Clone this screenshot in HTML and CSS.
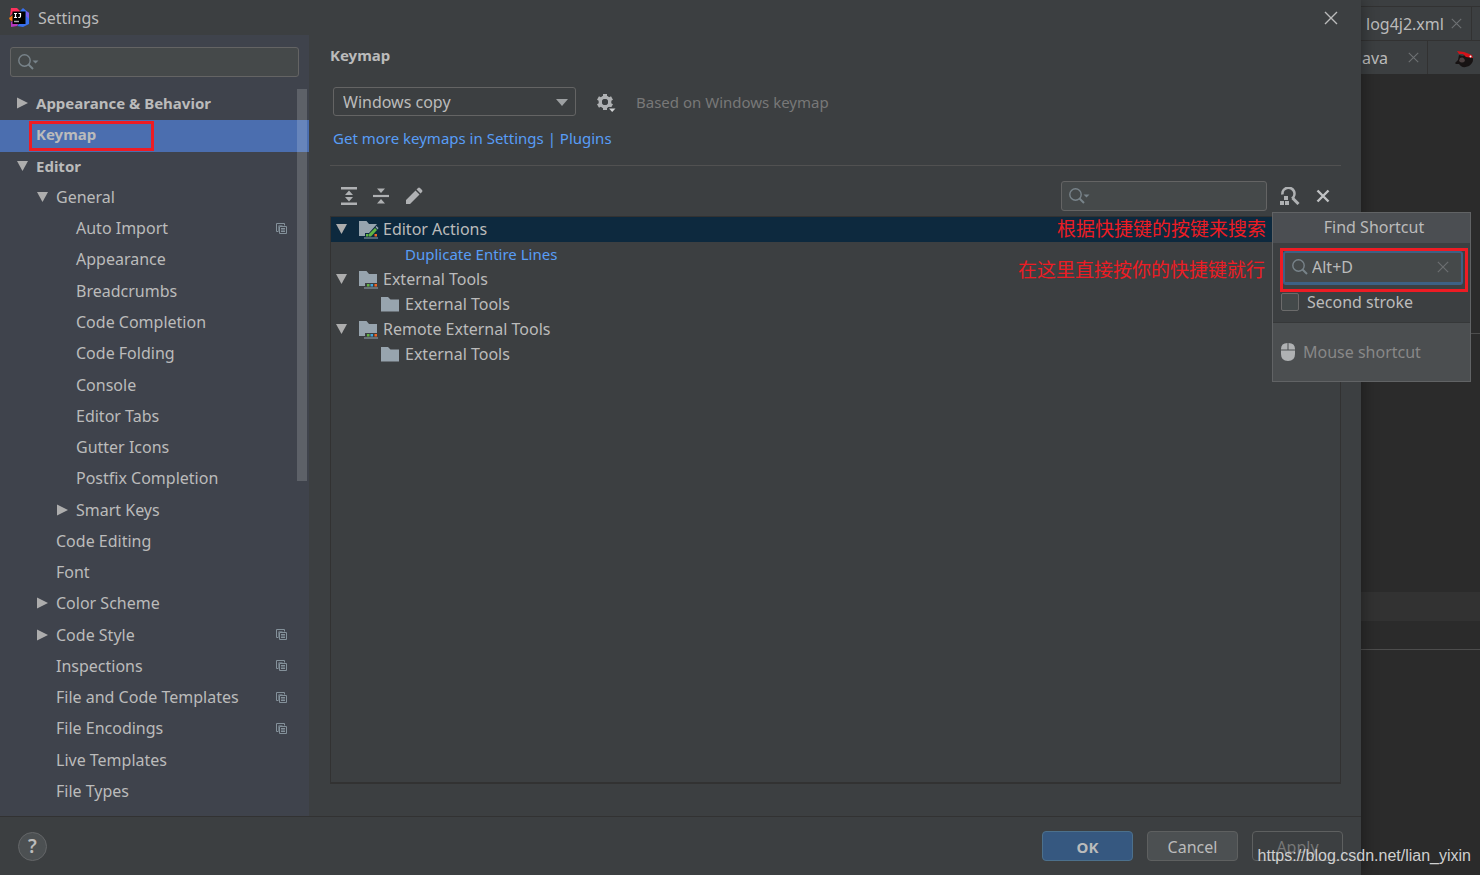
FILE: index.html
```html
<!DOCTYPE html>
<html lang="en">
<head>
<meta charset="utf-8">
<title>Settings</title>
<link rel="stylesheet" href="styles.css">
</head>
<body>
<svg class="defs" aria-hidden="true">
  <symbol id="right" viewBox="0 0 12 12"><path d="M1 0.500L12 6L1 11.500z" fill="#adadad"/></symbol>
  <symbol id="down" viewBox="0 0 12 12"><path d="M1 1H12L6.500 11z" fill="#adadad"/></symbol>
  <symbol id="copy" viewBox="0 0 11 11"><path d="M2.500 8.500H0.500V0.500H8.500V2.500" fill="none" stroke="#84919a"/><path d="M2.500 2.500h4M2.500 3v5" stroke="#66717b"/><path d="M3.500 3.500h7v7h-7z" fill="none" stroke="#84919a"/><path d="M5 5.500h4M5 8.500h4M5 7h4" stroke="#84919a"/></symbol>
  <symbol id="search" viewBox="0 0 16 16"><circle cx="6.500" cy="6.500" r="5.700" fill="none" stroke="#78838a" stroke-width="1.400"/><path d="M10.500 10.500L15 15" stroke="#78838a" stroke-width="2"/></symbol>
  <symbol id="search-menu" viewBox="0 0 21 16"><circle cx="6.500" cy="6.500" r="5.700" fill="none" stroke="#78838a" stroke-width="1.400"/><path d="M10.500 10.500L15 15" stroke="#78838a" stroke-width="2"/><path d="M14.500 6.500h6L17.500 9.500z" fill="#78838a"/></symbol>
  <symbol id="folder" viewBox="0 0 18 16"><path d="M0 1H7L9.500 3.500H18V15.500H0z" fill="#97a4ae"/></symbol>
  <symbol id="tools" viewBox="0 0 20 18"><path d="M0 0H7.500L10 3H18V12H6V15H0z" fill="#97a4ae"/><path d="M5 17H19" stroke="#97a4ae"/><path d="M8 13h2.500v2.500H8z" fill="#62b543"/><path d="M11.500 13H14v2.500h-2.500z" fill="#40a5dc"/><path d="M15.500 13H18v2.500h-2.500z" fill="#f26522"/></symbol>
  <symbol id="edit-tools" viewBox="0 0 20 18"><path d="M0 0H7.500L10 3H18L10 12H6V15H0z" fill="#97a4ae"/><path d="M5 17H19" stroke="#97a4ae"/><path d="M7 13h2.500v2.500H7z" fill="#62b543"/><path d="M10 15.500V13L16 7L18 9L12 15.500z" fill="#62b543"/><path d="M16.500 6L17.500 5L19.500 7L18.500 8.500z" fill="#97a4ae"/><path d="M15.500 13H18v2.500h-2.500z" fill="#f26522"/></symbol>
  <symbol id="close" viewBox="0 0 14 14"><path d="M1 1L13 13M13 1L1 13" fill="none" stroke="currentColor" stroke-width="1.400"/></symbol>
</svg>

<div class="dialog">
  <header class="titlebar">
    <svg class="logo" viewBox="0 0 20 19"><path d="M2 0H8L11 3V5H4L1 8z" fill="#fe315d"/><path d="M0 10L4 7V14L1 12z" fill="#f97a12"/><path d="M11 3L14 0L20 5V16L16 18L14 19L8 18L14 12z" fill="#3870ee"/><path d="M2 14L5 12L9 16L8 18L2 19z" fill="#b736bd"/><path d="M17 3L20 5V11L17 8z" fill="#7b5ceb"/><path d="M3.500 3.500H16.500V16H3.500z" fill="#000"/><path d="M5 5.500H8M6.500 5V10M5 9.500H8M9.500 5.500H12M11.500 5V8Q11.500 9.700 9.300 9.500" fill="none" stroke="#fff" stroke-width="1.200"/><path d="M5 13.500H10" stroke="#aaa" stroke-width="1.500"/></svg>
    <span>Settings</span>
    <button class="icon-button title-close" aria-label="Close"><svg width="14" height="14"><use href="#close"/></svg></button>
  </header>
  <div class="content">
    <nav class="sidebar">
      <label class="search-box side-search"><svg width="21" height="16"><use href="#search-menu"/></svg><input type="text" aria-label="Search settings"></label>
      <ul class="nav">
        <li class="l0 bold"><svg class="arrow"><use href="#right"/></svg>Appearance &amp; Behavior</li>
        <li class="l0 bold selected"><span class="arrow"></span>Keymap<i class="mark"></i></li>
        <li class="l0 bold"><svg class="arrow"><use href="#down"/></svg>Editor</li>
        <li class="l1"><svg class="arrow"><use href="#down"/></svg>General</li>
        <li class="l2"><span class="arrow"></span>Auto Import<svg class="copy"><use href="#copy"/></svg></li>
        <li class="l2"><span class="arrow"></span>Appearance</li>
        <li class="l2"><span class="arrow"></span>Breadcrumbs</li>
        <li class="l2"><span class="arrow"></span>Code Completion</li>
        <li class="l2"><span class="arrow"></span>Code Folding</li>
        <li class="l2"><span class="arrow"></span>Console</li>
        <li class="l2"><span class="arrow"></span>Editor Tabs</li>
        <li class="l2"><span class="arrow"></span>Gutter Icons</li>
        <li class="l2"><span class="arrow"></span>Postfix Completion</li>
        <li class="l2"><svg class="arrow"><use href="#right"/></svg>Smart Keys</li>
        <li class="l1"><span class="arrow"></span>Code Editing</li>
        <li class="l1"><span class="arrow"></span>Font</li>
        <li class="l1"><svg class="arrow"><use href="#right"/></svg>Color Scheme</li>
        <li class="l1"><svg class="arrow"><use href="#right"/></svg>Code Style<svg class="copy"><use href="#copy"/></svg></li>
        <li class="l1"><span class="arrow"></span>Inspections<svg class="copy"><use href="#copy"/></svg></li>
        <li class="l1"><span class="arrow"></span>File and Code Templates<svg class="copy"><use href="#copy"/></svg></li>
        <li class="l1"><span class="arrow"></span>File Encodings<svg class="copy"><use href="#copy"/></svg></li>
        <li class="l1"><span class="arrow"></span>Live Templates</li>
        <li class="l1"><span class="arrow"></span>File Types</li>
      </ul>
    </nav>
    <main class="main">
      <h1>Keymap</h1>
      <div class="scheme">
        <span class="select-wrap"><select aria-label="Keymap scheme"><option>Windows copy</option></select><svg width="12" height="7" viewBox="0 0 12 7"><path d="M0 0H12L6 7z" fill="#9da0a2"/></svg></span>
        <button class="icon-button" aria-label="Scheme actions"><svg width="20" height="20" viewBox="0 0 20 20"><circle cx="9" cy="10" r="4.700" fill="none" stroke="#afb1b3" stroke-width="3.400"/><path d="M9 2V5M9 15V18M2 6L5 7.700M13 12.300L16 14M16 6L13 7.700M5 12.300L2 14" stroke="#afb1b3" stroke-width="4"/><circle cx="9" cy="10" r="2.900" fill="#3c3f41"/><path d="M11.500 15H20L16 20z" fill="#3c3f41"/><path d="M13 16.500H19.500L16.200 20z" fill="#d0d2d3"/></svg></button>
        <span class="muted">Based on Windows keymap</span>
      </div>
      <a class="link" href="#">Get more keymaps in Settings | Plugins</a>
      <div class="toolbar">
        <button class="icon-button" aria-label="Expand all"><svg width="16" height="18" viewBox="0 0 16 18"><path d="M0 1.200H16M0 16.800H16" stroke="#afb1b3" stroke-width="2.400"/><path d="M8 3.500L12 8H4zM8 14.500L12 10H4z" fill="#afb1b3"/></svg></button>
        <button class="icon-button" aria-label="Collapse all"><svg width="16" height="18" viewBox="0 0 16 18"><path d="M0 9H16" stroke="#afb1b3" stroke-width="2.200"/><path d="M8 6L12 1.500H4zM8 12L12 16.500H4z" fill="#afb1b3"/></svg></button>
        <button class="icon-button" aria-label="Edit shortcut"><svg width="18" height="18" viewBox="0 0 18 18"><path d="M1 17V13L10.500 3.500L14.500 7.500L5 17z M11.500 2.500L13 1Q14 0 15 1L17 3Q18 4 17 5L15.500 6.500z" fill="#afb1b3"/></svg></button>
        <label class="search-box tool-search"><svg width="21" height="16"><use href="#search-menu"/></svg><input type="text" aria-label="Search actions"></label>
        <button class="icon-button" aria-label="Find by shortcut"><svg width="20" height="18" viewBox="0 0 20 18"><path d="M2.500 7.500A6 6 0 1 1 12 11.500" fill="none" stroke="#afb1b3" stroke-width="2.600"/><path d="M12.500 11L18.500 17" stroke="#afb1b3" stroke-width="3"/><path d="M4 9h4v4H4zM0 14h4v4H0zM5 14h4v4H5z" fill="#afb1b3"/></svg></button>
        <button class="icon-button clear" aria-label="Clear filter"><svg width="14" height="14" viewBox="0 0 14 14"><path d="M1.500 1.500L12.500 12.500M12.500 1.500L1.500 12.500" stroke="#c0c2c4" stroke-width="2.400"/></svg></button>
        <section class="popup">
          <h2>Find Shortcut</h2>
          <div class="popup-body">
            <label class="search-box shortcut"><svg width="16" height="16"><use href="#search"/></svg><input type="text" value="Alt+D" aria-label="Shortcut"><svg class="reset" width="12" height="12"><use href="#close"/></svg></label>
            <label class="check"><input type="checkbox">Second stroke</label>
          </div>
          <div class="mouse"><svg width="14" height="18" viewBox="0 0 14 18"><path d="M6.500 0V6.500H0V6Q0 0 6.500 0zM7.500 0V6.500H14V6Q14 0 7.500 0zM0 7.500H14V11Q14 18 7 18Q0 18 0 11z" fill="#afb1b3"/></svg>Mouse shortcut</div>
        </section>
      </div>
      <div class="tree-panel">
        <ul class="tree">
          <li class="active"><svg class="arrow"><use href="#down"/></svg><svg class="group"><use href="#edit-tools"/></svg>Editor Actions</li>
          <li class="action">Duplicate Entire Lines</li>
          <li><svg class="arrow"><use href="#down"/></svg><svg class="group"><use href="#tools"/></svg>External Tools</li>
          <li class="child"><svg class="folder"><use href="#folder"/></svg>External Tools</li>
          <li><svg class="arrow"><use href="#down"/></svg><svg class="group"><use href="#tools"/></svg>Remote External Tools</li>
          <li class="child"><svg class="folder"><use href="#folder"/></svg>External Tools</li>
        </ul>
        <p class="note note-a" lang="zh">根据快捷键的按键来搜索</p>
        <p class="note note-b" lang="zh">在这里直接按你的快捷键就行</p>
      </div>
    </main>
  </div>
  <footer class="footer">
    <button class="help" aria-label="Help">?</button>
    <button class="button primary">OK</button>
    <button class="button">Cancel</button>
    <button class="button" disabled>Apply</button>
  </footer>
</div>

<aside class="editor">
  <div class="editor-top"></div>
  <div class="tabs"><span class="tab">log4j2.xml<svg width="11" height="11"><use href="#close"/></svg></span></div>
  <div class="tabs tabs-second"><span class="tab wide">ava<svg width="11" height="11"><use href="#close"/></svg></span><svg class="bird" width="20" height="18" viewBox="0 0 20 18"><path d="M0 13L3 10L4 5L8 6Q12 2 17 6Q20 12 14 16Q7 19 4 14L1 14z" fill="#171313"/><path d="M5 8Q9 6 10 11Q7 14 4 11z" fill="#4c4040"/><path d="M2 1L9 2L17 5L18 8L11 7L8 4L4 4z" fill="#d3131a"/><circle cx="15.500" cy="6.500" r="1" fill="#fff"/></svg></div>
  <div class="code"><div class="code-a"></div><div class="code-b"></div><div class="caret-line"></div><div class="code-c"></div><div class="code-d"></div></div>
</aside>
<div class="watermark">https://blog.csdn.net/lian_yixin</div>
</body>
</html>
```
FILE: styles.css
```css
* { box-sizing: border-box; }
body {
  margin: 0;
  min-height: 100vh;
  display: flex;
  position: relative;
  overflow: hidden;
  background: #2b2b2b;
  color: #bbbbbb;
  font: 16px/20px "Noto Sans", "Open Sans", "Noto Sans CJK SC", sans-serif;
}
button, input, select { font: inherit; color: inherit; }
ul { list-style: none; margin: 0; padding: 0; }
svg { display: block; flex: none; }
.defs { position: absolute; width: 0; height: 0; }
.dialog {
  flex: 1;
  display: flex;
  flex-direction: column;
  background: #3c3f41;
  position: relative;
  z-index: 1;
  box-shadow: 0 0 16px rgba(0, 0, 0, 0.4);
}
.titlebar { height: 35px; display: flex; align-items: center; gap: 9px; padding: 0 23px 0 9px; }
.logo { width: 20px; height: 19px; }
.icon-button { background: none; border: 0; padding: 0; display: flex; }
.title-close { margin-left: auto; }
.content { flex: 1; display: flex; }

.sidebar { width: 309px; background: #3f434c; display: flex; flex-direction: column; padding: 12px 0 8px; }
.search-box {
  display: flex;
  align-items: center;
  height: 30px;
  padding: 0 7px;
  background: #45494a;
  border: 1px solid #646464;
  border-radius: 3px;
}
.search-box input { flex: 1; min-width: 0; border: 0; padding: 0; background: none; outline: 0; }
.side-search { margin: 0 10px 12px; }
.nav { flex: 1; display: flex; flex-direction: column; position: relative; }
.nav::after {
  content: "";
  position: absolute;
  top: 0;
  right: 2px;
  width: 10px;
  height: 392px;
  background: rgba(255, 255, 255, 0.16);
}
.nav li { flex: 1; display: flex; align-items: center; gap: 8px; padding-right: 22px; padding-bottom: 3px; position: relative; }
.nav .l0 { padding-left: 16px; }
.nav .l1 { padding-left: 36px; }
.nav .l2 { padding-left: 56px; }
.nav .bold { font-weight: 700; font-size: 15px; }
.selected { background: #4b6eaf; }
.arrow { width: 12px; height: 12px; flex: none; }
.copy { width: 11px; height: 11px; margin-left: auto; }
.mark { position: absolute; left: 29px; top: 1px; width: 125px; height: 30px; border: 3px solid #ed1c24; }

.main { flex: 1; display: flex; flex-direction: column; padding: 10px 20px 32px 21px; }
h1 { margin: 0 0 22px; font-size: 15px; line-height: 20px; }
.scheme { display: flex; align-items: center; gap: 20px; padding-left: 3px; height: 29px; }
.select-wrap { position: relative; width: 243px; }
.select-wrap svg { position: absolute; right: 8px; top: 12px; }
select { appearance: none; width: 100%; height: 29px; padding: 0 9px; background: #3c3f41; border: 1px solid #646464; border-radius: 3px; }
.muted { color: #787878; font-size: 15px; }
.link { color: #589df6; font-size: 15px; text-decoration: none; padding: 12px 3px 17px; border-bottom: 1px solid #515151; }
.toolbar { display: flex; align-items: center; gap: 16px; position: relative; padding: 15px 11px 5px; }
.tool-search { width: 206px; margin-left: auto; margin-right: -3px; }
.tree-panel { flex: 1; position: relative; border: 1px solid #323232; border-bottom-width: 2px; }
.tree li { display: flex; align-items: center; height: 25px; padding: 0 0 1px 4px; }
.tree .active { background: #0d293e; }
.tree .group { width: 20px; height: 18px; margin: 2px 4px 0 12px; }
.tree .folder { width: 18px; height: 16px; margin-right: 6px; }
.tree .child { padding-left: 50px; }
.tree .action { padding: 0 0 2px 74px; color: #589df6; font-size: 15px; }
.note { position: absolute; margin: 0; color: #ed1c24; font: 19px/24px "Noto Sans CJK SC", sans-serif; }
.note-a { right: 74px; top: -1px; }
.note-b { right: 75px; top: 40px; }

.popup { position: absolute; z-index: 2; top: 46px; right: -130px; width: 199px; background: #3c3f41; border: 1px solid #616365; }
.popup h2 { margin: 0; padding: 0 0 1px 5px; font-size: 16px; font-weight: 400; line-height: 29px; text-align: center; background: #4b4e52; }
.popup-body { padding: 5px 2px 8px 7px; border-bottom: 1px solid #363839; }
.shortcut {
  height: 44px;
  padding: 0 16px 7px 9px;
  gap: 4px;
  border: 3px solid #ed1c24;
  border-radius: 0;
  background: #3c3f41;
  position: relative;
}
.shortcut::before {
  content: "";
  position: absolute;
  inset: 0 2px 4px 0;
  border: 2px solid #3d6185;
  border-bottom-width: 3px;
  border-radius: 3px;
  background: #45494a;
}
.shortcut > * { position: relative; }
.reset { color: #6b6e70; }
.check { display: flex; align-items: center; gap: 8px; height: 20px; margin-bottom: 2px; padding-left: 1px; }
.check input { appearance: none; width: 18px; height: 18px; margin: 0; border: 1px solid #6b6b6b; border-radius: 2px; background: #43494a; }
.mouse { display: flex; align-items: center; gap: 8px; height: 58px; padding-left: 8px; background: #4b4e50; color: #888888; }

.footer { display: flex; align-items: center; gap: 14px; height: 59px; padding: 0 18px; border-top: 1px solid #323232; }
.help { width: 29px; height: 29px; margin-right: auto; padding: 0; border: 1px solid #646668; border-radius: 50%; background: #4c5052; font-size: 19px; font-weight: 600; }
.button { width: 91px; height: 30px; padding: 1px 0 0; border: 1px solid #5e6060; border-radius: 4px; background: #4c5052; }
.primary { background: #365880; border-color: #4c708c; font-weight: 700; font-size: 15px; }
.button:disabled { background: none; color: #777777; }

.editor { width: 119px; display: flex; flex-direction: column; }
.editor-top { height: 6px; background: #3c3f41; }
.tabs { display: flex; height: 34px; background: #3c3f41; border-top: 1px solid #323232; }
.tab { display: flex; align-items: center; gap: 7px; padding: 0 9px 0 5px; border-right: 1px solid #323232; }
.tab svg { color: #6e7173; }
.tab.wide { gap: 20px; padding: 0 8px 0 1px; }
.bird { margin: 9px 0 0 27px; }
.code { flex: 1; display: flex; flex-direction: column; }
.code-a { height: 260px; border-bottom: 1px solid #4d4d4d; }
.code-b { flex: 1; }
.caret-line { height: 29px; background: #323232; }
.code-c { height: 29px; border-bottom: 1px solid #4d4d4d; }
.code-d { height: 225px; }
.watermark { position: absolute; z-index: 3; right: 9px; bottom: 9px; color: #d0d0d0; font: 16px/20px "Liberation Sans", sans-serif; }
```
